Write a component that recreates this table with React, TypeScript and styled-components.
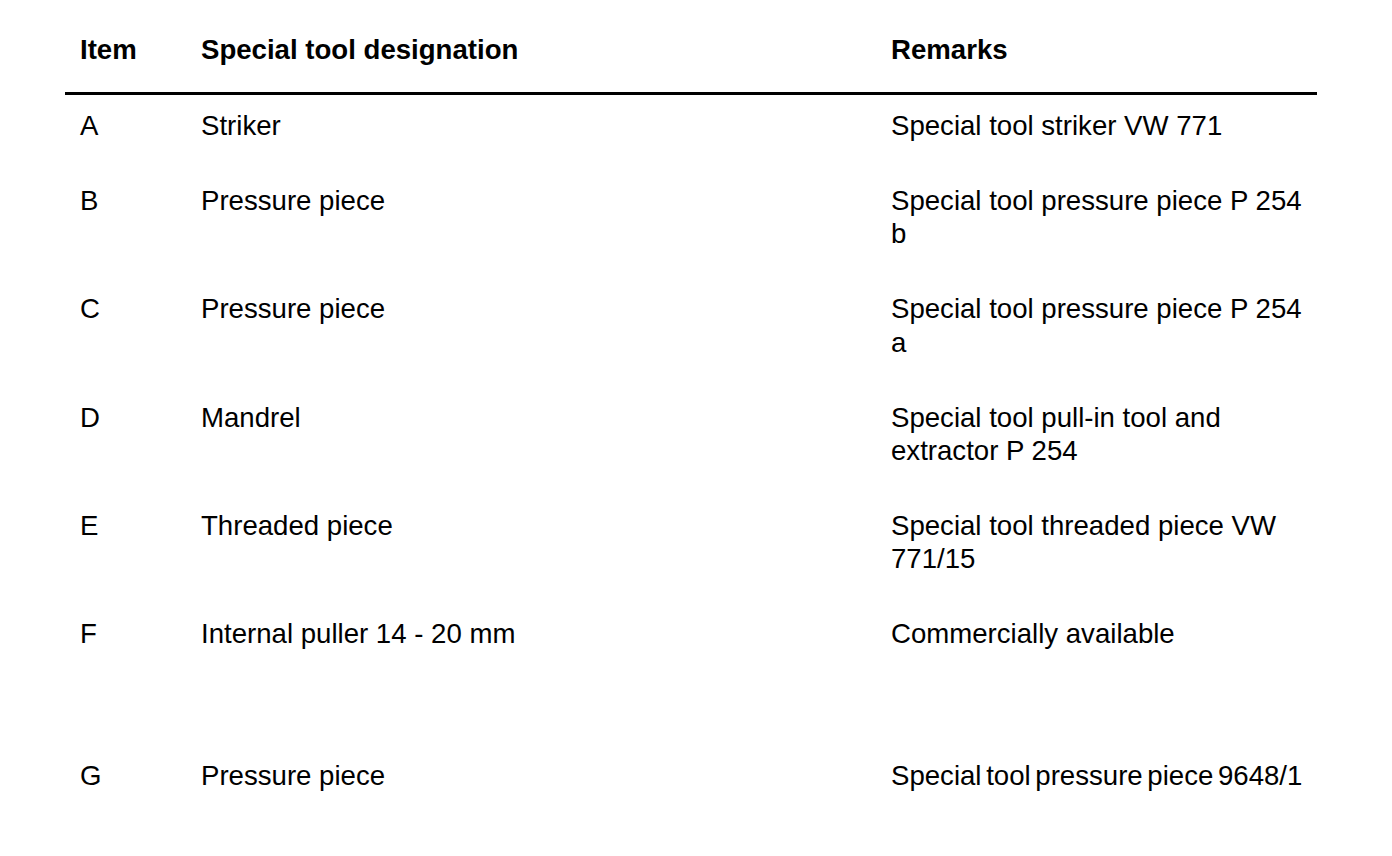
import { FC } from 'react';
import styled, { createGlobalStyle } from 'styled-components';

const GlobalStyle = createGlobalStyle`
  html, body {
    margin: 0;
    padding: 0;
    background: #ffffff;
  }
  body {
    font-family: 'Liberation Sans', Arial, sans-serif;
    color: #000000;
  }
`;

const Page = styled.main`
  width: 1392px;
  min-height: 856px;
  padding: 33px 0 0 65px;
  box-sizing: border-box;
`;

const Table = styled.div`
  width: 1252px;
  display: flex;
  flex-direction: column;
`;

const Row = styled.div<{ $lines?: number; $head?: boolean }>`
  display: grid;
  grid-template-columns: 136px 690px 426px;
  font-size: 27.6px;
  line-height: 33.3px;
  font-weight: ${(p) => (p.$head ? 700 : 400)};
  min-height: ${(p) => (p.$lines ?? 1) * 33.3}px;
  padding-bottom: ${(p) => (p.$head ? 25.7 : 41.7)}px;
  border-bottom: ${(p) => (p.$head ? '3px solid #000' : 'none')};
  margin-bottom: ${(p) => (p.$head ? 14 : 0)}px;
`;

const Cell = styled.div<{ $tight?: boolean }>`
  word-spacing: ${(p) => (p.$tight ? '-3px' : 'normal')};
  &:first-child {
    padding-left: 15px;
  }
`;

type Tool = {
  item: string;
  name: string;
  remark: string;
  lines?: number;
  tight?: boolean;
};

const tools: Tool[] = [
  { item: 'A', name: 'Striker', remark: 'Special tool striker VW 771' },
  { item: 'B', name: 'Pressure piece', remark: 'Special tool pressure piece P 254 b' },
  { item: 'C', name: 'Pressure piece', remark: 'Special tool pressure piece P 254 a' },
  { item: 'D', name: 'Mandrel', remark: 'Special tool pull-in tool and extractor P 254' },
  { item: 'E', name: 'Threaded piece', remark: 'Special tool threaded piece VW 771/15' },
  { item: 'F', name: 'Internal puller 14 - 20 mm', remark: 'Commercially available', lines: 3 },
  { item: 'G', name: 'Pressure piece', remark: 'Special tool pressure piece 9648/1', tight: true },
];

const App: FC = () => {
  return (
    <>
      <GlobalStyle />
      <Page>
        <Table>
          <Row $head>
            <Cell>Item</Cell>
            <Cell>Special tool designation</Cell>
            <Cell>Remarks</Cell>
          </Row>
          {tools.map((t) => (
            <Row key={t.item} $lines={t.lines}>
              <Cell>{t.item}</Cell>
              <Cell>{t.name}</Cell>
              <Cell $tight={t.tight}>{t.remark}</Cell>
            </Row>
          ))}
        </Table>
      </Page>
    </>
  );
};

export default App;
